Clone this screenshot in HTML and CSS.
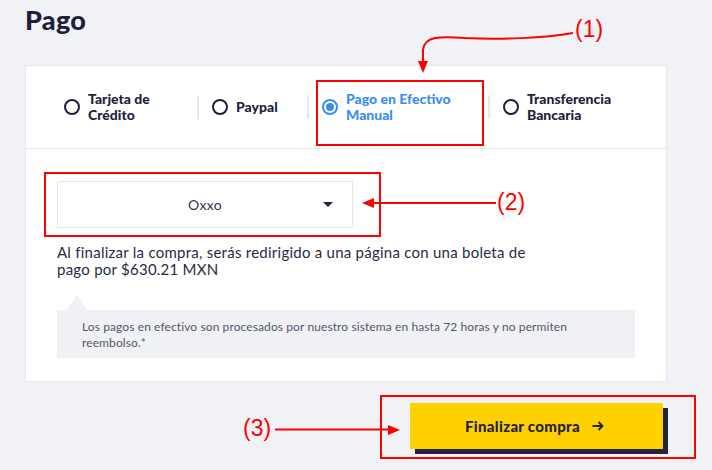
FILE: index.html
```html
<!DOCTYPE html>
<html lang="es">
<head>
<meta charset="utf-8">
<title>Pago</title>
<link rel="stylesheet" href="styles.css">
</head>
<body>
<div class="page">
  <h1 class="title">Pago</h1>
  <section class="card">
    <div class="tabs">
      <div class="tab">
        <span class="radio"></span>
        <span class="tab-label">Tarjeta de<br>Crédito</span>
      </div>
      <div class="tab">
        <span class="tab-sep"></span>
        <span class="radio"></span>
        <span class="tab-label">Paypal</span>
      </div>
      <div class="tab tab-active">
        <span class="tab-sep"></span>
        <span class="radio radio-on"><span class="radio-dot"></span></span>
        <span class="tab-label">Pago en Efectivo<br>Manual</span>
      </div>
      <div class="tab">
        <span class="tab-sep"></span>
        <span class="radio"></span>
        <span class="tab-label">Transferencia<br>Bancaria</span>
      </div>
    </div>
    <div class="content">
      <div class="select">
        <span></span>
        <span class="select-value">Oxxo</span>
        <span class="caret"></span>
      </div>
      <p class="note">Al finalizar la compra, serás redirigido a una página con una boleta de pago por $630.21 MXN</p>
      <div class="info">Los pagos en efectivo son procesados por nuestro sistema en hasta 72 horas y no permiten reembolso.*</div>
    </div>
  </section>
  <div class="actions">
    <button class="btn-primary" type="button">
      <span>Finalizar compra</span>
      <svg class="btn-arrow" width="12" height="10" viewBox="0 0 12 10"><path d="M0.5 5 H10.5 M6.5 1 L10.5 5 L6.5 9" fill="none" stroke="#23223f" stroke-width="1.8"/></svg>
    </button>
  </div>
</div>
<svg class="annotations" width="712" height="470" viewBox="0 0 712 470">
  <g fill="none" stroke="#f00" stroke-width="2">
    <rect x="317" y="81" width="166" height="64"/>
    <rect x="45" y="173" width="335" height="63"/>
    <rect x="381" y="396" width="314" height="62"/>
    <path d="M573 33 C545 38 500 40 465 38 C440 36 424 36 423 50 L423 62"/>
    <path d="M496 203 L372 203"/>
    <path d="M275 429.5 L390 429.5"/>
  </g>
  <g fill="#f00">
    <polygon points="418,61 428,61 423,73"/>
    <polygon points="362,203 374,198 374,208"/>
    <polygon points="400,430 388,425 388,435"/>
    <text x="575" y="37" class="ann-label">(1)</text>
    <text x="497" y="210" class="ann-label">(2)</text>
    <text x="243" y="436" class="ann-label">(3)</text>
  </g>
</svg>
</body>
</html>
```
FILE: styles.css
```css
* { box-sizing: border-box; }
html, body { margin: 0; padding: 0; }
body {
  background: #f1f2f6;
  font-family: Lato, "Noto Sans", sans-serif;
  color: #22223f;
  width: 712px;
  height: 470px;
  overflow: hidden;
  position: relative;
}
.page {
  padding: 5px 45px 0 25px;
}
.title {
  margin: 0;
  font-size: 27px;
  line-height: 30px;
  font-weight: 900;
  color: #1f1f3d;
  letter-spacing: 0.3px;
}
.card {
  margin-top: 30px;
  width: 642px;
  background: #fff;
  border: 1px solid #e4e7ec;
}
.tabs {
  display: grid;
  grid-template-columns: 133px 110px 181px 1fr;
  height: 83px;
  padding-left: 38px;
  border-bottom: 1px solid #e4e7ec;
}
.tab {
  display: flex;
  align-items: center;
}
.tab-sep {
  width: 2px;
  height: 23px;
  background: #e6e8ee;
  margin-right: 13px;
}
.radio {
  width: 16px;
  height: 16px;
  border: 2px solid #1f1f3d;
  border-radius: 50%;
  margin-right: 8px;
  flex: none;
  display: flex;
  align-items: center;
  justify-content: center;
}
.radio-on { border-color: #3a8ef0; }
.radio-dot {
  width: 8px;
  height: 8px;
  border-radius: 50%;
  background: #3a8ef0;
}
.tab-label {
  font-size: 14px;
  line-height: 16px;
  font-weight: 900;
  color: #1f1f3d;
}
.tab-active .tab-label { color: #3a8ef0; }
.content {
  padding: 32px 31px 23px 31px;
}
.select {
  width: 296px;
  height: 47px;
  border: 1px solid #e3e6ec;
  display: grid;
  grid-template-columns: 1fr auto 1fr;
  align-items: center;
  padding: 0 19px;
}
.select-value {
  font-size: 14px;
  color: #34344c;
  letter-spacing: 0.3px;
}
.caret {
  justify-self: end;
  width: 0;
  height: 0;
  border-left: 5px solid transparent;
  border-right: 5px solid transparent;
  border-top: 5px solid #22223f;
}
.note {
  margin: 16px 0 0 0;
  max-width: 490px;
  font-size: 15px;
  line-height: 17px;
  color: #2a2a44;
  letter-spacing: 0.25px;
}
.info {
  position: relative;
  margin-top: 32px;
  background: #f0f1f5;
  padding: 9px 25px 7px 25px;
  font-size: 12px;
  line-height: 16px;
  color: #55566c;
  letter-spacing: 0.1px;
}
.info::before {
  content: "";
  position: absolute;
  left: 10px;
  top: -15px;
  border-left: 10px solid transparent;
  border-right: 10px solid transparent;
  border-bottom: 15px solid #f0f1f5;
}
.actions {
  display: flex;
  justify-content: flex-end;
  margin-top: 21px;
  padding-right: 4px;
}
.btn-primary {
  width: 253px;
  height: 46px;
  border: 0;
  background: #ffd100;
  box-shadow: 5px 5px 0 #23223f;
  font-family: inherit;
  font-size: 15px;
  font-weight: 900;
  letter-spacing: 0.3px;
  color: #23223f;
  display: flex;
  align-items: center;
  justify-content: center;
  gap: 12px;
  padding: 0 4px 0 0;
}
.annotations {
  position: absolute;
  left: 0;
  top: 0;
  pointer-events: none;
}
.ann-label {
  font-family: "Liberation Sans", Arial, sans-serif;
  font-size: 23px;
}
```
